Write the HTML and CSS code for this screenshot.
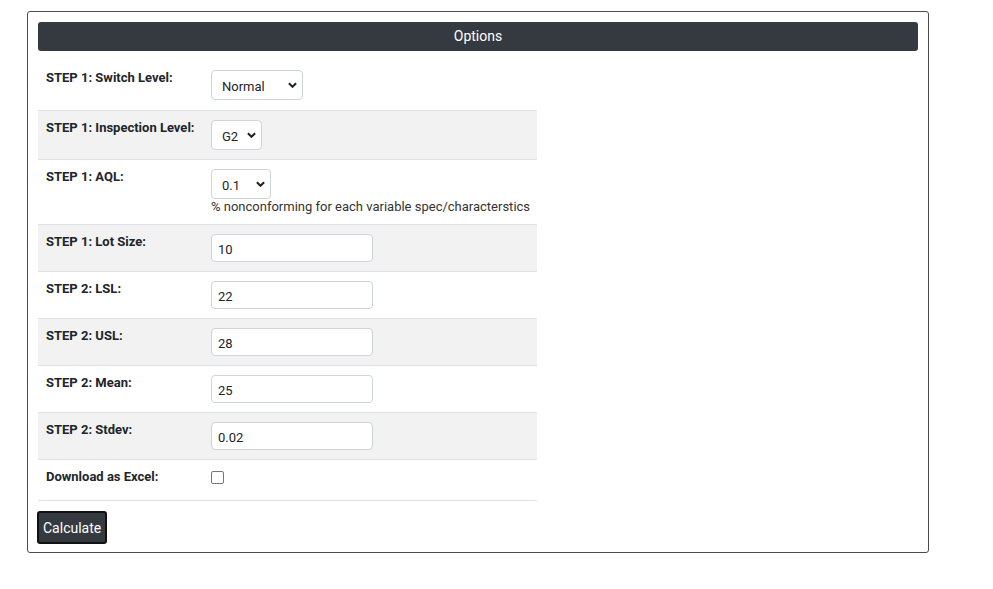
FILE: index.html
```html
<!DOCTYPE html>
<html>
<head>
<meta charset="utf-8">
<link rel="stylesheet" href="styles.css">
</head>
<body>
<div class="panel">
  <div class="panel-head">Options</div>
  <table class="opts">
    <tr class="first">
      <th>STEP 1: Switch Level:</th>
      <td><span class="sel w-normal"><select><option>Normal</option></select><svg class="chev" viewBox="0 0 10 6"><path d="M1 1l4 4 4-4" /></svg></span></td>
    </tr>
    <tr class="alt">
      <th>STEP 1: Inspection Level:</th>
      <td><span class="sel w-g2"><select><option>G2</option></select><svg class="chev" viewBox="0 0 10 6"><path d="M1 1l4 4 4-4" /></svg></span></td>
    </tr>
    <tr>
      <th>STEP 1: AQL:</th>
      <td><span class="sel w-aql"><select><option>0.1</option></select><svg class="chev" viewBox="0 0 10 6"><path d="M1 1l4 4 4-4" /></svg></span>
        <div class="hint">% nonconforming for each variable spec/characterstics</div></td>
    </tr>
    <tr class="alt">
      <th>STEP 1: Lot Size:</th>
      <td><input class="txt" type="text" value="10"></td>
    </tr>
    <tr>
      <th>STEP 2: LSL:</th>
      <td><input class="txt" type="text" value="22"></td>
    </tr>
    <tr class="alt">
      <th>STEP 2: USL:</th>
      <td><input class="txt" type="text" value="28"></td>
    </tr>
    <tr>
      <th>STEP 2: Mean:</th>
      <td><input class="txt" type="text" value="25"></td>
    </tr>
    <tr class="alt">
      <th>STEP 2: Stdev:</th>
      <td><input class="txt" type="text" value="0.02"></td>
    </tr>
    <tr class="last">
      <th>Download as Excel:</th>
      <td><input class="chk" type="checkbox"></td>
    </tr>
  </table>
  <button class="btn" type="button">Calculate</button>
</div>
</body>
</html>
```
FILE: styles.css
```css
* { box-sizing: border-box; }
body {
  margin: 0;
  padding: 11px 0 0 27px;
  font-family: Roboto, "Liberation Sans", Arial, sans-serif;
  color: #212529;
  background: #fff;
}
.panel {
  width: 902px;
  border: 1px solid #4a4a4a;
  border-radius: 3px;
  padding: 10px 10px 8px 10px;
}
.panel-head {
  height: 29px;
  background: #343a40;
  color: #fff;
  border-radius: 3px;
  text-align: center;
  font-size: 14px;
  font-weight: 400;
  line-height: 29px;
  margin-bottom: 10px;
}
.opts {
  border-collapse: collapse;
  table-layout: fixed;
  width: 499px;
}
.opts tr { border-bottom: 1px solid #dee2e6; }
.opts tr.alt { background: #f2f2f2; }
.opts th {
  width: 165px;
  text-align: left;
  vertical-align: top;
  font-size: 13px;
  font-weight: 700;
  color: #212529;
  padding: 9px 8px 8px 8px;
  line-height: 15px;
}
.opts td {
  padding: 9px 8px 9px 8px;
  vertical-align: top;
  font-size: 13px;
}
.opts tr.first td { padding-bottom: 10px; }
.sel {
  position: relative;
  display: inline-block;
  vertical-align: top;
}
.sel select {
  appearance: none;
  -webkit-appearance: none;
  height: 30px;
  border: 1px solid #ced4da;
  border-radius: 4px;
  background: #fff;
  font-family: Roboto, "Liberation Sans", Arial, sans-serif;
  font-size: 13px;
  color: #212529;
  padding: 3px 0 0 10px;
  outline: none;
  display: block;
}
.w-normal select { width: 92px; }
.w-g2 select { width: 51px; }
.w-aql select { width: 60px; }
.chev {
  position: absolute;
  right: 6px;
  top: 12px;
  width: 9px;
  height: 6px;
  fill: none;
  stroke: #222;
  stroke-width: 2.2;
  pointer-events: none;
}
.hint {
  margin-top: 0;
  font-size: 13px;
  color: #333;
  line-height: 16px;
  white-space: nowrap;
}
.txt {
  display: block;
  width: 162px;
  height: 28px;
  border: 1px solid #ced4da;
  border-radius: 4px;
  background: #fff;
  font-family: Roboto, "Liberation Sans", Arial, sans-serif;
  font-size: 13px;
  color: #212529;
  padding: 2px 0 0 6px;
  outline: none;
}
.chk {
  appearance: none;
  -webkit-appearance: none;
  width: 13px;
  height: 13px;
  border: 1px solid #767676;
  border-radius: 2px;
  margin: 2px 0 0 0;
  background: #fff;
  display: block;
}
.opts tr.last td { padding-bottom: 16px; }
.btn {
  display: block;
  margin: 10px 0 0 -1px;
  height: 33px;
  padding: 0 4px;
  background: #343a40;
  color: #fff;
  border: 2px solid #111;
  border-radius: 3px;
  font-family: Roboto, "Liberation Sans", Arial, sans-serif;
  font-size: 14px;
}
```
